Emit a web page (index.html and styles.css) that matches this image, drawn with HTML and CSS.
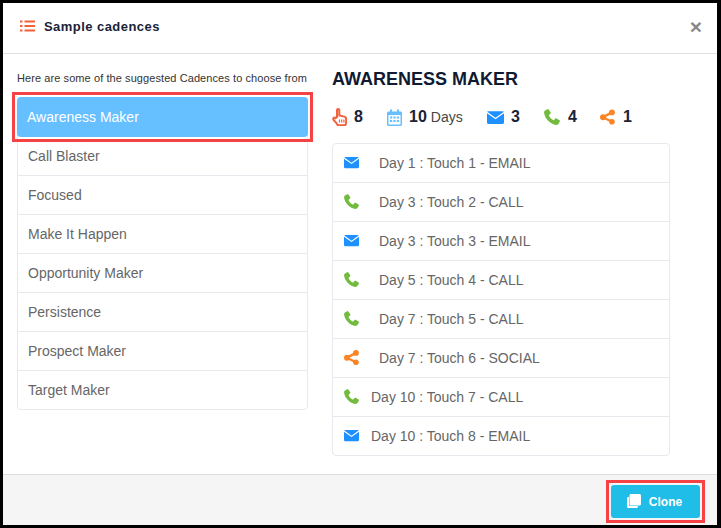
FILE: index.html
```html
<!DOCTYPE html>
<html lang="en">
<head>
    <meta charset="UTF-8">
    <title>Sample cadences</title>
    <link rel="stylesheet" href="styles.css">
</head>
<body>
    <svg class="icon-defs" width="0" height="0">
        <symbol id="i-mail" viewBox="0 0 16 12"><path d="M1.2 0h13.600c.5 0 .9.2 1.100.5L8 6.200.1.500C.3.200.7 0 1.200 0zM0 2l8 5.700L16 2v8.800c0 .7-.5 1.200-1.200 1.200H1.200C.5 12 0 11.500 0 10.800z"/></symbol>
        <symbol id="i-phone" viewBox="0 0 16 16"><path d="M3.500.3 1 1.500C.2 2 0 2.800.1 3.800c.5 5.600 6.300 11.700 12.100 12.100 1 .1 1.800-.4 2.300-1.200l1.300-2.200c.3-.5.2-1-.3-1.300l-3-1.800c-.5-.3-1-.2-1.300.2l-1.100 1.300c-.3.300-.7.400-1 .2-1.700-1-3.200-2.600-4.100-4.300-.2-.4-.1-.7.200-1l1.200-1.100c.4-.3.500-.8.300-1.300L4.800.7C4.500.2 4-.1 3.500.3z"/></symbol>
        <symbol id="i-share" viewBox="0 0 16 16"><circle cx="12.700" cy="3.100" r="3.100"/><circle cx="3.200" cy="8.200" r="3.200"/><circle cx="12.700" cy="13" r="3"/><path d="M12.700 3.100 3.200 8.200l9.500 4.800" fill="none" stroke="currentColor" stroke-width="2.500"/></symbol>
    </svg>

    <div class="modal">
        <header class="modal-header">
            <svg class="head-icon" viewBox="0 0 15 12">
                <rect x="0" y="0.500" width="2.500" height="2"/><rect x="0" y="5" width="2.500" height="2"/><rect x="0" y="9.500" width="2.500" height="2"/>
                <rect x="4.500" y="0.500" width="10.500" height="2"/><rect x="4.500" y="5" width="10.500" height="2"/><rect x="4.500" y="9.500" width="10.500" height="2"/>
            </svg>
            <h2>Sample cadences</h2>
            <span class="close">×</span>
        </header>

        <main class="modal-body">
            <section class="left-col">
                <p class="hint">Here are some of the suggested Cadences to choose from</p>
                <ul class="cadence-list">
                    <li class="active">Awareness Maker</li>
                    <li>Call Blaster</li>
                    <li>Focused</li>
                    <li>Make It Happen</li>
                    <li>Opportunity Maker</li>
                    <li>Persistence</li>
                    <li>Prospect Maker</li>
                    <li>Target Maker</li>
                </ul>
            </section>

            <section class="right-col">
                <h3>AWARENESS MAKER</h3>
                <div class="stats">
                    <span class="stat stat-touch">
                        <svg class="touch" viewBox="0 0 15 18" fill="none" stroke="currentColor" stroke-width="2"><path d="M5 9V2.200C5 .6 7.300.6 7.300 2.200V7.500l5 1.100c1.200.3 1.900 1.200 1.900 2.400v3.300c0 1.200-.5 2-1 3H5.800c-.6-1.400-2-2.800-4-5.200-1.300-1.600.4-3.200 1.800-2z"/><path d="M7.500 11.500v3M9.700 11.500v3M11.900 11.500v3" stroke-width="1.200"/></svg>
                        <b>8</b>
                    </span>
                    <span class="stat stat-days">
                        <svg class="cal" viewBox="0 0 15 17"><path d="M1.500 2.500h12c.8 0 1.500.7 1.500 1.500v11.500c0 .8-.7 1.500-1.500 1.500h-12C.7 17 0 16.300 0 15.500V4c0-.8.7-1.500 1.500-1.500z"/><rect x="3" y="0.500" width="2" height="3.500"/><rect x="10" y="0.500" width="2" height="3.500"/><g fill="#fff"><rect x="1.500" y="6" width="12" height="9.500"/></g><g><rect x="3" y="7.500" width="2.200" height="2"/><rect x="6.400" y="7.500" width="2.200" height="2"/><rect x="9.800" y="7.500" width="2.200" height="2"/><rect x="3" y="11" width="2.200" height="2"/><rect x="6.400" y="11" width="2.200" height="2"/><rect x="9.800" y="11" width="2.200" height="2"/></g></svg>
                        <b>10</b> <small>Days</small>
                    </span>
                    <span class="stat stat-mail"><svg class="big-mail c-mail"><use href="#i-mail"/></svg><b>3</b></span>
                    <span class="stat stat-call"><svg class="big-phone c-call"><use href="#i-phone"/></svg><b>4</b></span>
                    <span class="stat stat-share"><svg class="big-share c-share"><use href="#i-share"/></svg><b>1</b></span>
                </div>

                <ul class="touch-list">
                    <li><svg class="t-icon c-mail"><use href="#i-mail"/></svg><span class="day">Day 1 : Touch 1 - EMAIL</span></li>
                    <li><svg class="t-icon c-call"><use href="#i-phone"/></svg><span class="day">Day 3 : Touch 2 - CALL</span></li>
                    <li><svg class="t-icon c-mail"><use href="#i-mail"/></svg><span class="day">Day 3 : Touch 3 - EMAIL</span></li>
                    <li><svg class="t-icon c-call"><use href="#i-phone"/></svg><span class="day">Day 5 : Touch 4 - CALL</span></li>
                    <li><svg class="t-icon c-call"><use href="#i-phone"/></svg><span class="day">Day 7 : Touch 5 - CALL</span></li>
                    <li><svg class="t-icon c-share"><use href="#i-share"/></svg><span class="day">Day 7 : Touch 6 - SOCIAL</span></li>
                    <li><svg class="t-icon c-call"><use href="#i-phone"/></svg><span class="day wide">Day 10 : Touch 7 - CALL</span></li>
                    <li><svg class="t-icon c-mail"><use href="#i-mail"/></svg><span class="day wide">Day 10 : Touch 8 - EMAIL</span></li>
                </ul>
            </section>
        </main>

        <footer class="modal-footer">
            <button class="clone-btn">
                <svg class="clone-icon" viewBox="0 0 14 14"><path d="M4 0h8.500C13.300 0 14 .7 14 1.500V10c0 .8-.7 1.500-1.500 1.500H4c-.8 0-1.500-.7-1.500-1.500V1.500C2.500.7 3.200 0 4 0z"/><path d="M1.500 3H2v7.500C2 11.300 2.700 12 3.500 12H11v.5c0 .8-.7 1.500-1.500 1.500h-8C.7 14 0 13.300 0 12.500v-8C0 3.700.7 3 1.500 3z"/></svg>
                Clone
            </button>
        </footer>
    </div>
</body>
</html>
```

FILE: styles.css
```css
* {
    margin: 0;
    padding: 0;
    box-sizing: border-box;
    font-family: "Liberation Sans", Arial, sans-serif;
}

body {
    width: 721px;
    height: 528px;
    background: #fff;
    overflow: hidden;
}

.icon-defs {
    display: block;
}

.modal {
    width: 721px;
    height: 528px;
    border-style: solid;
    border-color: #000;
    border-width: 3px 4px 3px 3px;
    display: flex;
    flex-direction: column;
    background: #fff;
}

.modal-header {
    height: 51px;
    flex: none;
    display: flex;
    align-items: center;
    padding: 0 17px 4px;
    border-bottom: 1px solid #e0e0e0;
}

.head-icon {
    width: 15px;
    height: 12px;
    fill: #f4603a;
    margin-right: 9px;
}

.modal-header h2 {
    font-size: 13px;
    font-weight: bold;
    letter-spacing: 0.45px;
    color: #1a2238;
}

.close {
    margin-left: auto;
    margin-right: -2px;
    font-size: 21px;
    font-weight: bold;
    color: #888;
    line-height: 1;
}

.modal-body {
    flex: 1;
    display: flex;
    padding: 0 14px;
}

.left-col {
    width: 291px;
    flex: none;
}

.hint {
    font-size: 11px;
    letter-spacing: 0.08px;
    color: #333;
    margin-top: 18px;
    line-height: 13px;
    white-space: nowrap;
}

.cadence-list {
    list-style: none;
    margin-top: 12px;
    border: 1px solid #e6e9ed;
    border-radius: 4px;
}

.cadence-list li {
    height: 39px;
    line-height: 38px;
    padding-left: 10px;
    font-size: 14px;
    color: #666;
    border-bottom: 1px solid #e6e9ed;
}

.cadence-list li:last-child {
    height: 38px;
    border-bottom: none;
}

.cadence-list li.active {
    position: relative;
    height: 40px;
    margin: -1px -1px 0;
    padding-left: 10px;
    line-height: 40px;
    background: #66c0ff;
    color: #fff;
    border: none;
    border-radius: 4px;
}

/* red annotation boxes sit over the content */
.cadence-list li.active::after,
.clone-btn::after {
    content: "";
    position: absolute;
    inset: -5px;
    border: 3px solid #f44245;
}

.right-col {
    margin-left: 24px;
    width: 338px;
}

.right-col h3 {
    font-size: 18px;
    font-weight: bold;
    color: #101a33;
    margin-top: 15px;
    line-height: 21px;
}

.stats {
    display: flex;
    align-items: center;
    height: 20px;
    margin-top: 17px;
    color: #1a2238;
}

.stat {
    display: flex;
    align-items: center;
    font-size: 16px;
    white-space: nowrap;
}

.stat svg {
    flex: none;
}

.stat small {
    font-size: 14px;
    color: #444;
    margin-left: 4px;
}

.stat-touch { width: 55px; }
.stat-days { width: 100px; }
.stat-mail { width: 57px; }
.stat-call { width: 56px; }

.touch {
    width: 15px;
    height: 18px;
    color: #f4603a;
    margin-right: 7px;
}

.cal {
    width: 15px;
    height: 17px;
    fill: #66c0ff;
    margin-right: 7px;
}

.big-mail { width: 17px; height: 13px; margin-right: 7px; }
.big-phone { width: 16px; height: 16px; margin-right: 8px; }
.big-share { width: 15px; height: 16px; margin-right: 8px; }

.c-mail { fill: #1e90ff; color: #1e90ff; }
.c-call { fill: #72bb3e; color: #72bb3e; }
.c-share { fill: #fb8425; color: #fb8425; }

.touch-list {
    list-style: none;
    width: 338px;
    margin-top: 16px;
    border: 1px solid #e6e9ed;
    border-radius: 4px;
}

.touch-list li {
    display: flex;
    align-items: center;
    height: 39px;
    padding-left: 11px;
    font-size: 14px;
    color: #666;
    border-bottom: 1px solid #e6e9ed;
}

.touch-list li:last-child {
    height: 38px;
    border-bottom: none;
}

.t-icon {
    width: 15px;
    height: 15px;
    flex: none;
    margin-top: -2px;
}

.day {
    margin-left: 20px;
}

.day.wide {
    margin-left: 12px;
}

.modal-footer {
    height: 51px;
    flex: none;
    display: flex;
    justify-content: flex-end;
    align-items: flex-start;
    padding: 10px 17px 0 0;
    background: #f5f5f5;
    border-top: 1px solid #ddd;
}

.clone-btn {
    position: relative;
    display: flex;
    align-items: center;
    justify-content: center;
    width: 89px;
    height: 33px;
    padding-right: 2px;
    border: none;
    border-radius: 3px;
    background: #20bde8;
    color: #fff;
    font-size: 12px;
    font-weight: bold;
}

.clone-icon {
    width: 14px;
    height: 14px;
    fill: #fff;
    margin-right: 8px;
    margin-top: -2px;
}
```
